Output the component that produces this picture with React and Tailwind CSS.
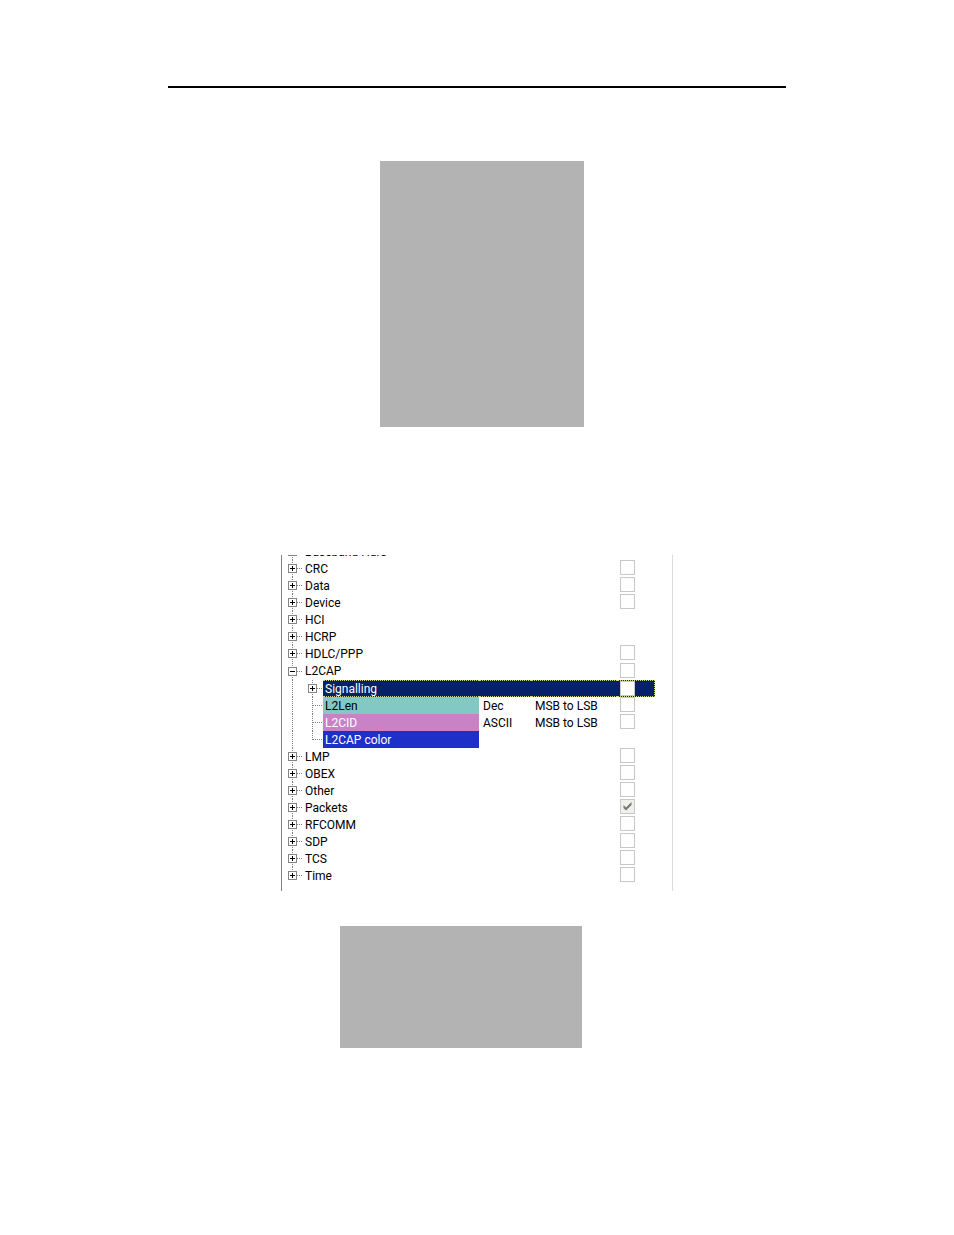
import { useState } from 'react';

const FIELDS = [
  { name: 'Baseband Hdrs', expander: '+' },
  { name: 'CRC', expander: '+', check: true },
  { name: 'Data', expander: '+', check: true },
  { name: 'Device', expander: '+', check: true },
  { name: 'HCI', expander: '+' },
  { name: 'HCRP', expander: '+' },
  { name: 'HDLC/PPP', expander: '+', check: true },
  { name: 'L2CAP', expander: '-', check: true },
  { name: 'Signalling', expander: '+', child: true, selected: true, check: true, color: 'bg-[#06206a] text-white' },
  { name: 'L2Len', child: true, format: 'Dec', order: 'MSB to LSB', check: true, color: 'bg-[#84c8c6] text-black' },
  { name: 'L2CID', child: true, format: 'ASCII', order: 'MSB to LSB', check: true, color: 'bg-[#c982c6] text-white' },
  { name: 'L2CAP color', child: true, lastChild: true, color: 'bg-[#1e30c8] text-white' },
  { name: 'LMP', expander: '+', check: true },
  { name: 'OBEX', expander: '+', check: true },
  { name: 'Other', expander: '+', check: true },
  { name: 'Packets', expander: '+', check: true, checked: true },
  { name: 'RFCOMM', expander: '+', check: true },
  { name: 'SDP', expander: '+', check: true },
  { name: 'TCS', expander: '+', check: true },
  { name: 'Time', expander: '+', check: true, last: true },
];

const SELECTED = 'bg-[#06206a] border-y border-dotted border-[#d8cf8a]';

// One 20px wide step of the tree: dotted guide lines with an optional +/- box
function Branch({ name, expander, stub, half }) {
  return (
    <span className="relative block h-full w-5 shrink-0">
      <span className={`absolute left-[10px] top-0 border-l border-dotted border-[#808080] ${half ? 'h-1/2' : 'h-full'}`} />
      {stub && <span className="absolute left-[10px] right-0 top-2 border-t border-dotted border-[#808080]" />}
      {expander && (
        <button type="button" aria-label={`Toggle ${name}`} className="absolute left-[6px] top-1 block bg-white">
          <svg width="9" height="9" viewBox="0 0 9 9" fill="none" shapeRendering="crispEdges">
            <rect x="0.5" y="0.5" width="8" height="8" stroke="#848484" />
            <path d={expander === '+' ? 'M2 4.5h5M4.5 2v5' : 'M2 4.5h5'} stroke="#000" />
          </svg>
        </button>
      )}
    </span>
  );
}

function FieldCheckbox({ name, initial }) {
  const [checked, setChecked] = useState(initial);

  return (
    <span className="relative block size-[15px]">
      <input
        type="checkbox"
        aria-label={name}
        checked={checked}
        onChange={(e) => setChecked(e.target.checked)}
        className="block size-[15px] appearance-none border border-[#c8c8c8] bg-white checked:bg-[#efefec]"
      />
      {checked && (
        <svg className="pointer-events-none absolute inset-0" width="15" height="15" viewBox="0 0 15 15">
          <path d="M3.5 6v3L6 11.5 11.5 6V3L6 8.5Z" fill="#777" />
        </svg>
      )}
    </span>
  );
}

function FieldRow({ field }) {
  const { name, expander, child, lastChild, last, selected, check, checked, color } = field;
  const highlight = selected ? SELECTED : '';

  return (
    <tr className={expander === '-' ? 'h-[18px]' : 'h-[17px]'}>
      <td className="p-0">
        <div className="flex h-[17px]">
          <Branch name={name} expander={child ? null : expander} stub={!child} half={last} />
          {child && <Branch name={name} expander={expander} stub half={lastChild} />}
          <span className={`flex flex-1 items-center ${child ? 'ml-px pl-[2px]' : 'pl-[3px]'} ${color || ''} ${highlight}`}>
            {name}
          </span>
        </div>
      </td>
      <td className="p-0">
        <div className={`flex h-[17px] items-center pl-1 ${highlight}`}>{field.format}</div>
      </td>
      <td className="p-0">
        <div className={`flex h-[17px] items-center pl-1 ${highlight}`}>{field.order}</div>
      </td>
      <td className="p-0">
        <div className={`flex h-[17px] items-start pl-[3px] ${highlight} ${selected ? 'border-r' : ''}`}>
          {check && <FieldCheckbox name={name} initial={!!checked} />}
        </div>
      </td>
    </tr>
  );
}

function FieldTree() {
  return (
    <div className="mx-auto flex h-[336px] w-[392px] max-w-full flex-col justify-end overflow-hidden border-l border-r border-l-[#808080] border-r-[#dcdcdc] pb-[7px] pr-[17px]">
      <table className="w-full table-fixed border-collapse text-xs leading-4 text-black">
        <colgroup>
          <col />
          <col className="w-[52px]" />
          <col className="w-[86px]" />
          <col className="w-[38px]" />
        </colgroup>
        <tbody>
          {FIELDS.map((field) => (
            <FieldRow key={field.name} field={field} />
          ))}
        </tbody>
      </table>
    </div>
  );
}

export default function App() {
  return (
    <main className="min-h-screen bg-white px-[168px] pb-20 pt-[86px] font-['Roboto',sans-serif]">
      <hr className="border-t-2 border-black" />
      <div className="ml-[212px] mt-[73px] h-[266px] w-[204px] bg-[#b3b3b3]" />
      <div className="mt-32">
        <FieldTree />
      </div>
      <div className="ml-[172px] mt-[35px] h-[122px] w-[242px] bg-[#b3b3b3]" />
    </main>
  );
}
